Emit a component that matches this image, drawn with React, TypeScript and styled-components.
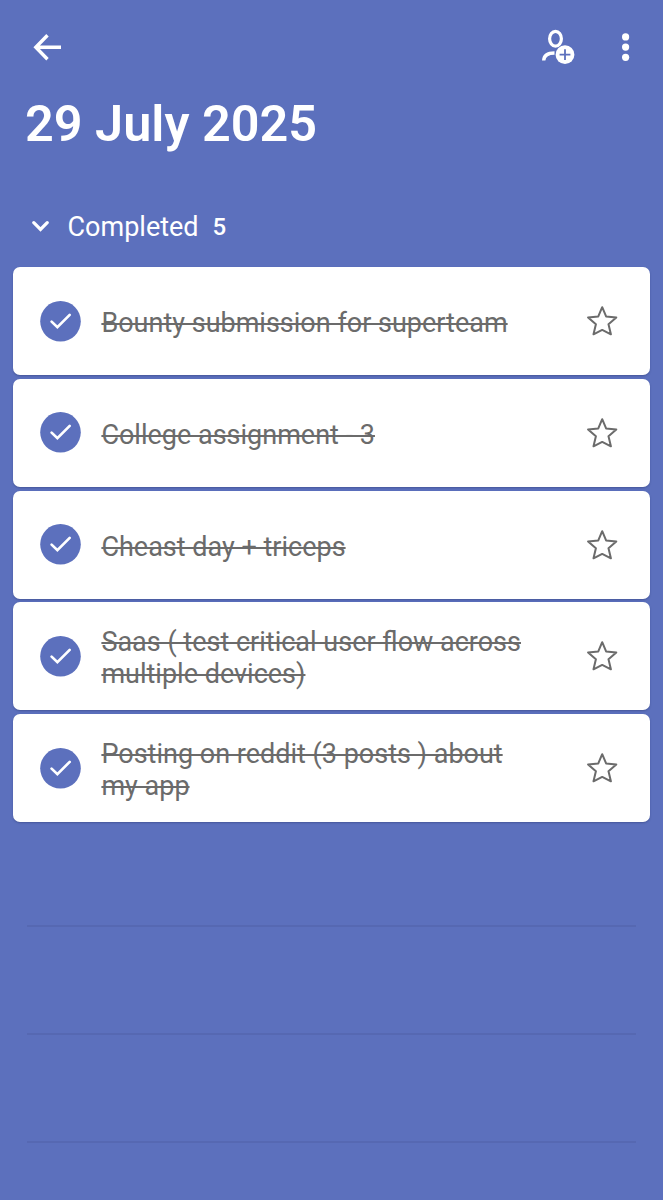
import React from "react";
import styled, { createGlobalStyle } from "styled-components";

const accent = "#5c70bd";

const GlobalStyle = createGlobalStyle`
  * { box-sizing: border-box; }
  body { margin: 0; background: ${accent}; font-family: Roboto, "Liberation Sans", sans-serif; }
`;

const Screen = styled.main`
  display: flex;
  flex-direction: column;
  height: 1200px;
  overflow: hidden;
  background: ${accent};
  color: #fff;
`;

const TopBar = styled.header`
  display: flex;
  align-items: center;
  height: 94px;
  padding: 0 33px 0 32px;
`;

const Spacer = styled.div`
  flex: 1;
`;

const IconButton = styled.button<{ $gap?: number }>`
  display: flex;
  padding: 0;
  margin-right: ${(p) => p.$gap ?? 0}px;
  border: 0;
  background: none;
  color: inherit;
`;

const Title = styled.h1`
  margin: 0;
  padding-left: 25px;
  height: 93px;
  font-size: 50.4px;
  line-height: 60px;
  font-weight: 600;
`;

const SectionHeader = styled.div`
  display: flex;
  align-items: center;
  height: 80px;
  padding: 0 0 1px 32px;
  font-size: 27px;
  line-height: 32px;

  svg {
    margin-bottom: 1px;
  }
`;

const SectionLabel = styled.span`
  margin-left: 18.5px;
`;

const Count = styled.span`
  margin: 1px 0 0 14px;
  font-size: 24px;
  font-weight: 500;
`;

const TaskList = styled.ul`
  display: flex;
  flex-direction: column;
  gap: 3.75px;
  margin: 0;
  padding: 0 13.4px;
  list-style: none;
`;

const TaskCard = styled.li`
  display: flex;
  align-items: center;
  height: 108px;
  padding: 0 31px 0 27px;
  border-radius: 7px;
  background: #fff;
  box-shadow: 0 1px 2px rgba(30, 40, 90, 0.35);
`;

const TaskText = styled.span`
  flex: 1;
  margin: 4px 40px 0 20px;
  color: #6b6b6b;
  font-size: 27px;
  line-height: 32px;
  text-decoration: line-through;
  text-decoration-thickness: 1.5px;
  white-space: pre-line;
`;

const Rule = styled.div`
  height: 108px;
  margin: 0 27px;
  flex-shrink: 0;
  border-bottom: 2px solid #5668b2;
`;

const Rules = styled.div`
  display: flex;
  flex-direction: column;
  margin-top: -3px;
`;

const BackIcon = () => (
  <svg width="30" height="30" viewBox="32 32 30 30" fill="none" stroke="currentColor" strokeWidth="3.4">
    <path d="M61 47.2H36.5M47.5 35.2 35.8 47.2l11.700 12" />
  </svg>
);

const AddPersonIcon = () => (
  <svg width="34" height="36" viewBox="541 29 34 36" fill="none">
    <ellipse cx="555.5" cy="38.8" rx="5.9" ry="7.4" stroke="#fff" strokeWidth="3.2" />
    <path d="M543.7 60.5C544 55.5 548 53 554.500 53" stroke="#fff" strokeWidth="3.4" />
    <circle cx="565" cy="54.7" r="9.4" fill="#fff" />
    <path d="M565 49.3v10.8M559.6 54.7h10.800" stroke={accent} strokeWidth="1.8" />
  </svg>
);

const MoreIcon = () => (
  <svg width="8" height="28" viewBox="0 0 8 28" fill="#fff">
    <circle cx="3.6" cy="3.9" r="3.6" />
    <circle cx="3.6" cy="14.1" r="3.6" />
    <circle cx="3.6" cy="24.3" r="3.6" />
  </svg>
);

const ChevronIcon = () => (
  <svg width="17" height="12" viewBox="0 0 17 12" fill="none" stroke="#fff" strokeWidth="3.2" strokeLinecap="round">
    <path d="m1.800 2.700 6.700 6.700 6.700-6.700" />
  </svg>
);

const CheckIcon = () => (
  <svg width="41" height="41" viewBox="0 0 41 41" fill="none">
    <circle cx="20.5" cy="20.3" r="20.3" fill={accent} />
    <path d="m11.600 20.600 5.800 5.600L29.700 13.900" stroke="#fff" strokeWidth="2.7" strokeLinecap="round" />
  </svg>
);

const StarIcon = () => (
  <svg width="32" height="32" viewBox="587.1 304.8 32 32" fill="none" stroke="#6b6b6b" strokeWidth="2" strokeLinejoin="round">
    <path d="m602.300 307 3.900 9.200 10.200 1-7.800 6.800 2.400 10.100-8.700-4.400-8.700 4.400 2.400-10.100-7.800-6.800 10.200-1z" />
  </svg>
);

const tasks = [
  "Bounty submission for superteam",
  "College assignment - 3",
  "Cheast day + triceps",
  "Saas ( test critical user flow across\nmultiple devices)",
  "Posting on reddit (3 posts ) about\nmy app",
];

export default function App() {
  return (
    <Screen>
      <GlobalStyle />
      <TopBar>
        <IconButton aria-label="Back"><BackIcon /></IconButton>
        <Spacer />
        <IconButton aria-label="Share list" $gap={47}><AddPersonIcon /></IconButton>
        <IconButton aria-label="More options"><MoreIcon /></IconButton>
      </TopBar>
      <Title>29 July 2025</Title>
      <SectionHeader>
        <ChevronIcon />
        <SectionLabel>Completed</SectionLabel>
        <Count>5</Count>
      </SectionHeader>
      <TaskList>
        {tasks.map((task) => (
          <TaskCard key={task}>
            <CheckIcon />
            <TaskText>{task}</TaskText>
            <StarIcon />
          </TaskCard>
        ))}
      </TaskList>
      <Rules>
        <Rule />
        <Rule />
        <Rule />
      </Rules>
    </Screen>
  );
}
